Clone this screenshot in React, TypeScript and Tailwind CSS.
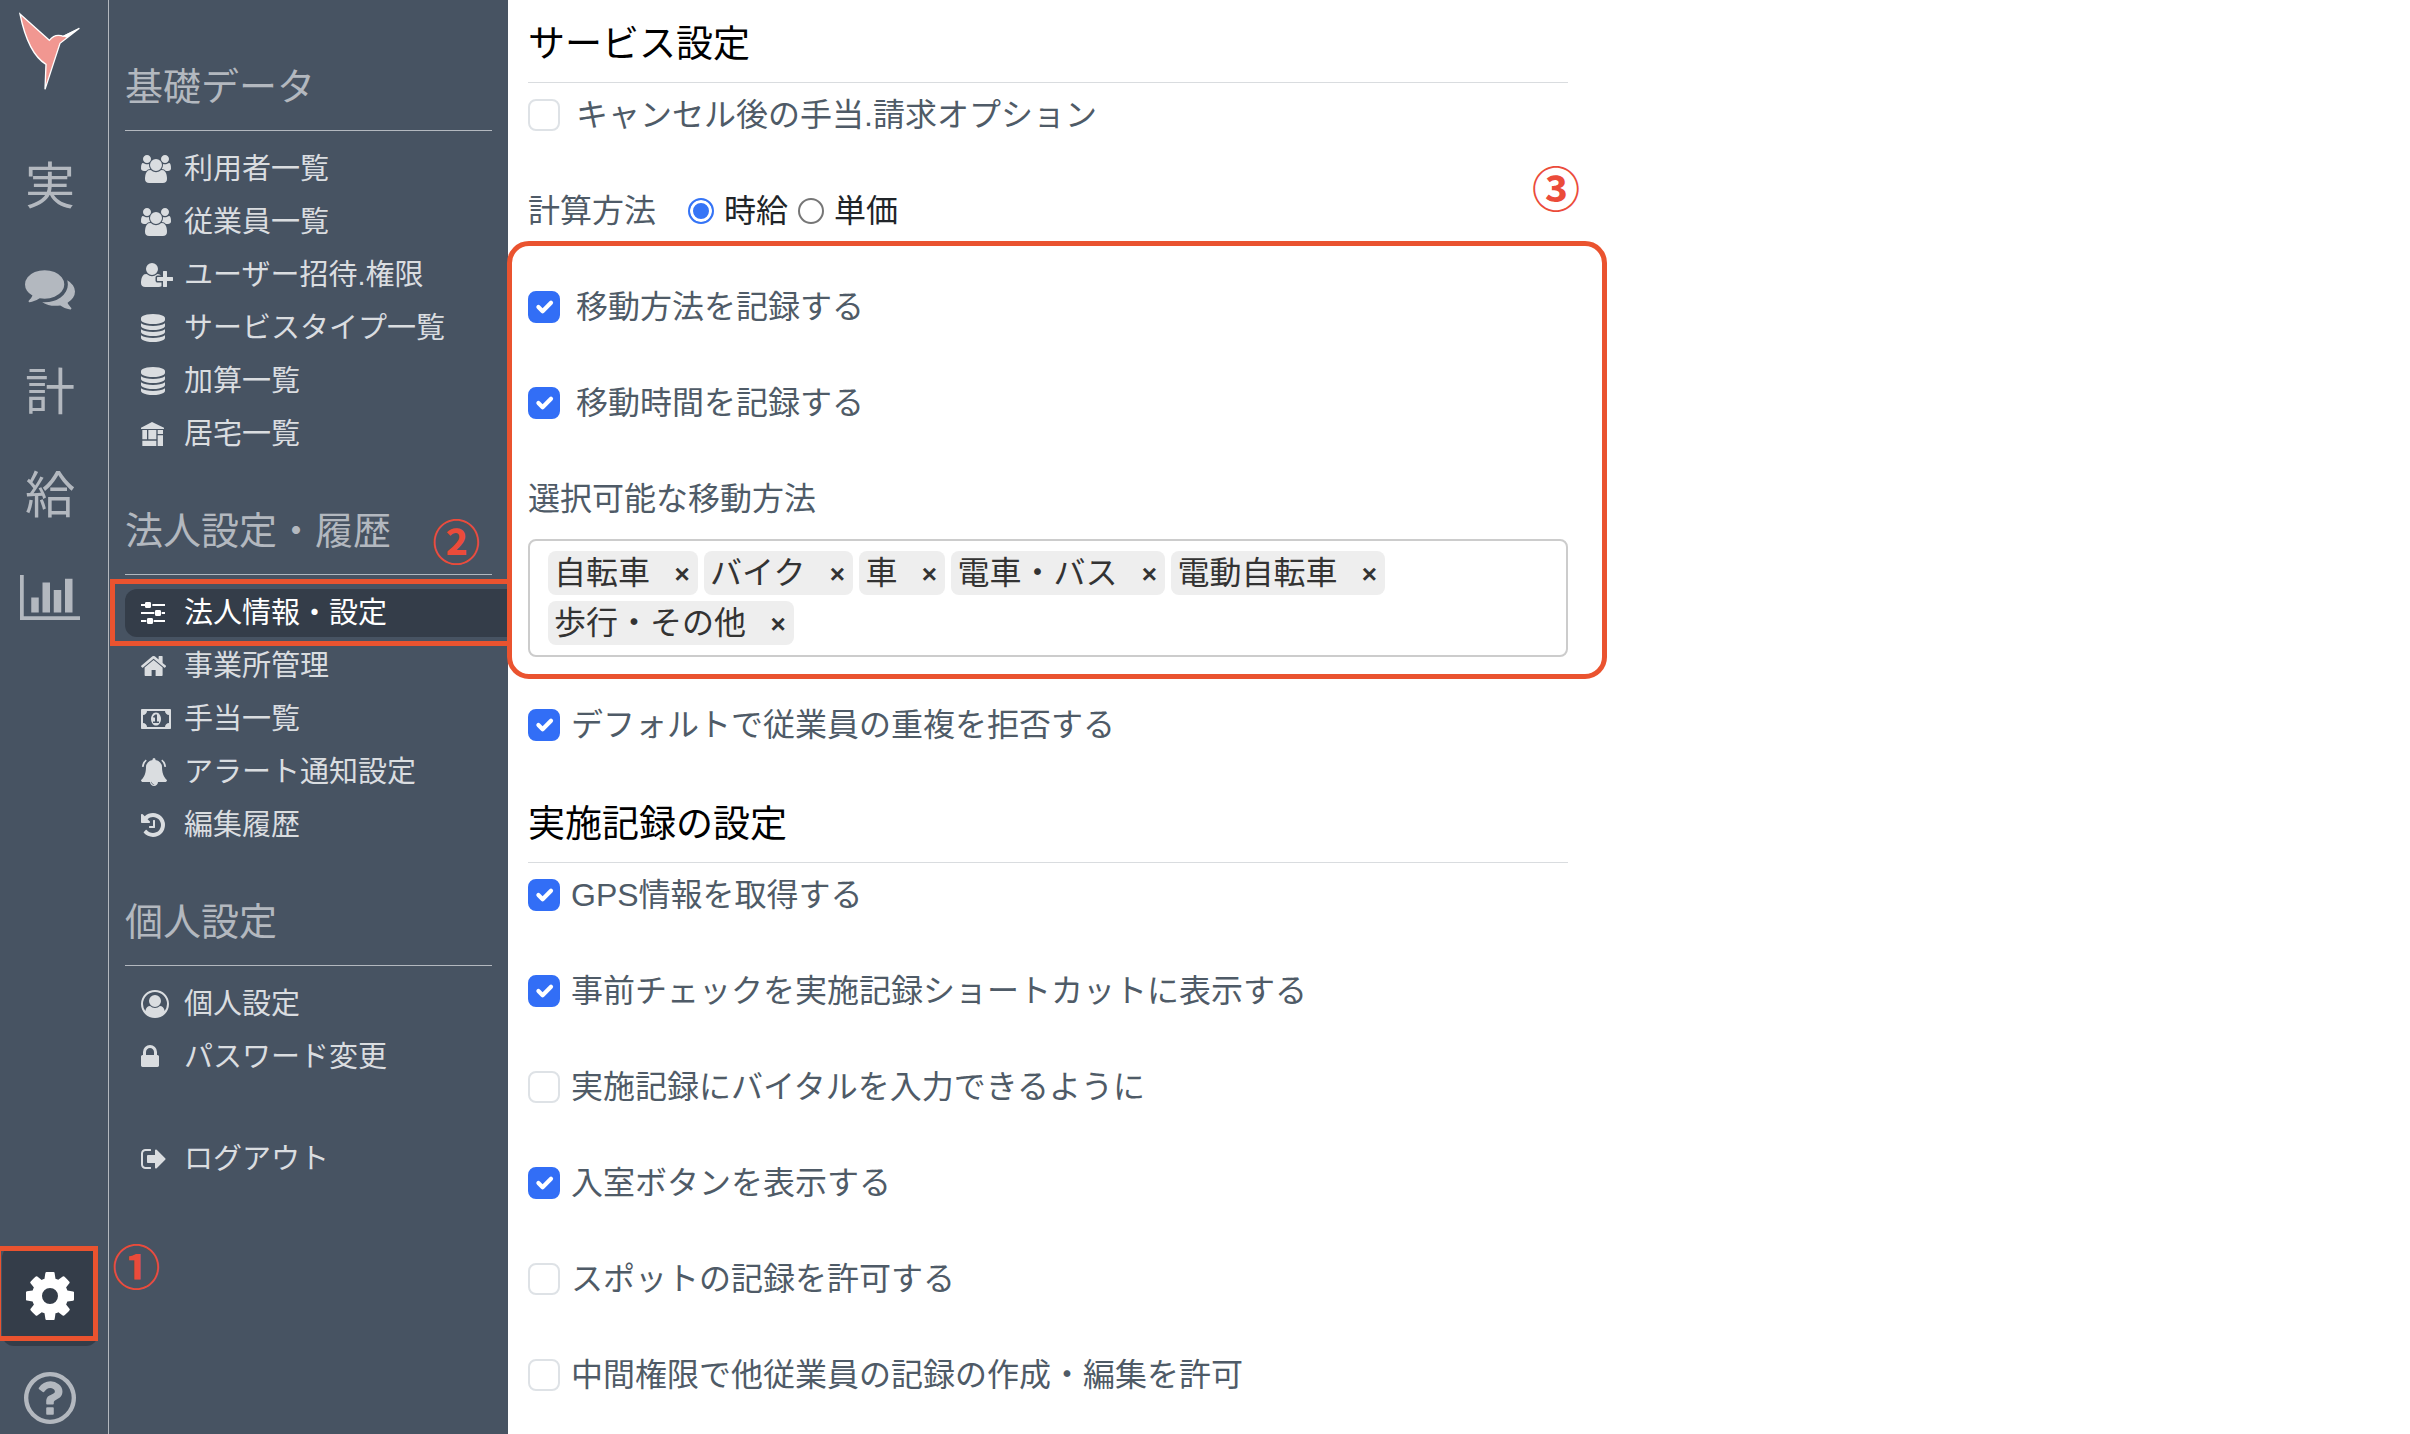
import React from 'react';
import clsx from 'clsx';

interface IconProps {
  name: keyof typeof icons;
  className?: string;
}

interface MenuItem {
  icon: keyof typeof icons;
  label: string;
  active?: boolean;
}

const icons = {
  users: {
    box: '0 0 1920 1792',
    d: 'M593 896q-162 5-265 128h-134q-82 0-138-40.5t-56-118.5q0-353 124-353 6 0 43.5 21t97.5 42.5 119 21.5q67 0 133-23-5 37-5 66 0 139 81 256zm1071 637q0 120-73 189.5t-194 69.5h-874q-121 0-194-69.5t-73-189.5q0-53 3.5-103.5t14-109 26.5-108.5 43-97.5 62-81 85.5-53.5 111.5-20q10 0 43 21.5t73 48 107 48 135 21.5 135-21.5 107-48 73-48 43-21.5q61 0 111.5 20t85.5 53.5 62 81 43 97.5 26.5 108.5 14 109 3.5 103.5zm-1024-1277q0 106-75 181t-181 75-181-75-75-181 75-181 181-75 181 75 75 181zm704 384q0 159-112.5 271.5t-271.5 112.5-271.5-112.5-112.5-271.5 112.5-271.5 271.5-112.5 271.5 112.5 112.5 271.5zm576 225q0 78-56 118.5t-138 40.5h-134q-103-123-265-128 81-117 81-256 0-29-5-66 66 23 133 23 59 0 119-21.5t97.5-42.5 43.5-21q124 0 124 353zm-128-609q0 106-75 181t-181 75-181-75-75-181 75-181 181-75 181 75 75 181z',
  },
  userPlus: {
    box: '0 0 2048 1792',
    d: 'M704 896q-159 0-271.5-112.5t-112.5-271.5 112.5-271.5 271.5-112.5 271.5 112.5 112.5 271.5-112.5 271.5-271.5 112.5zm960 128h352q13 0 22.5 9.5t9.5 22.5v192q0 13-9.5 22.5t-22.5 9.5h-352v352q0 13-9.5 22.5t-22.5 9.5h-192q-13 0-22.5-9.5t-9.5-22.5v-352h-352q-13 0-22.5-9.5t-9.5-22.5v-192q0-13 9.5-22.5t22.5-9.5h352v-352q0-13 9.5-22.5t22.5-9.5h192q13 0 22.5 9.5t9.5 22.5v352zm-736 224q0 52 38 90t90 38h256v238q-68 50-171 50h-874q-121 0-194-69t-73-190q0-53 3.5-103.5t14-109 26.5-108.5 43-97.5 62-81 85.5-53.5 111.5-20q19 0 39 17 79 61 154.5 91.5t164.5 30.5 164.5-30.5 154.5-91.5q20-17 39-17 132 0 217 96h-223q-52 0-90 38t-38 90v192z',
  },
  database: {
    box: '128 0 1536 1792',
    d: 'M896 768q237 0 443-43t325-127v170q0 69-103 128t-280 93.5-385 34.5-385-34.5-280-93.5-103-128v-170q119 84 325 127t443 43zm0 768q237 0 443-43t325-127v170q0 69-103 128t-280 93.5-385 34.5-385-34.5-280-93.5-103-128v-170q119 84 325 127t443 43zm0-384q237 0 443-43t325-127v170q0 69-103 128t-280 93.5-385 34.5-385-34.5-280-93.5-103-128v-170q119 84 325 127t443 43zm0-1152q208 0 385 34.5t280 93.5 103 128v128q0 69-103 128t-280 93.5-385 34.5-385-34.5-280-93.5-103-128v-128q0-69 103-128t280-93.5 385-34.5z',
  },
  building: {
    box: '0 -6 69 84',
    d: 'M0 17L33 0L69 17V21H0zM4 24h14v28H4zM22 24h24v28H22zM50 24h16v12H50zM4 56h42v16H4zM50 40h16v32H50z',
  },
  sliders: {
    box: '0 0 72 84',
    d: 'M0 15h12v6H0zM34 15h38v6H34zM0 39h40v6H0zM62 39h10v6H62zM0 63h16v6H0zM38 63h34v6H38zM16 9h10q4 0 4 4v10q0 4-4 4h-10q-4 0-4-4v-10q0-4 4-4zM46 33h10q4 0 4 4v10q0 4-4 4h-10q-4 0-4-4v-10q0-4 4-4zM22 57h10q4 0 4 4v10q0 4-4 4h-10q-4 0-4-4v-10q0-4 4-4z',
  },
  home: {
    box: '89 0 1614 1792',
    d: 'M1472 992v480q0 26-19 45t-45 19h-384v-384h-256v384h-384q-26 0-45-19t-19-45v-480q0-1 .5-3t.5-3l575-474 575 474q1 2 1 6zm223-69l-62 74q-8 9-21 11h-3q-13 0-21-7l-692-577-692 577q-12 8-24 7-13-2-21-11l-62-74q-8-10-7-23.5t11-21.5l719-599q32-26 76-26t76 26l244 204v-195q0-14 9-23t23-9h192q14 0 23 9t9 23v408l219 182q10 8 11 21.5t-7 23.5z',
  },
  money: {
    box: '0 0 1920 1792',
    d: 'M768 1152h384v-96h-128v-448h-114l-148 137 77 80q42-37 55-57h2v288h-128v96zm512-256q0 70-21 142t-59.5 134-101.5 101-138 39-138-39-101.5-101-59.5-134-21-142 21-142 59.5-134 101.5-101 138-39 138 39 101.5 101 59.5 134 21 142zm512 256v-512q-106 0-181-75t-75-181h-1152q0 106-75 181t-181 75v512q106 0 181 75t75 181h1152q0-106 75-181t181-75zm128-832v1152q0 26-19 45t-45 19h-1792q-26 0-45-19t-19-45v-1152q0-26 19-45t45-19h1792q26 0 45 19t19 45z',
  },
  bell: {
    box: '64 0 1664 1792',
    d: 'M912 1696q0-16-16-16-59 0-101.5-42.5t-42.5-101.5q0-16-16-16t-16 16q0 73 51.5 124.5t124.5 51.5q16 0 16-16zm816-288q0 52-38 90t-90 38h-448q0 106-75 181t-181 75-181-75-75-181h-448q-52 0-90-38t-38-90q50-42 91-88t85-119.5 74.5-158.5 50-206 19.5-260q0-152 117-282.5t307-158.5q-8-19-8-39 0-40 28-68t68-28 68 28 28 68q0 20-8 39 190 28 307 158.5t117 282.5q0 139 19.5 260t50 206 74.5 158.5 85 119.5 91 88zM370 90L430 170Q260 320 230 580L120 560Q150 260 370 90zM1422 90L1362 170Q1532 320 1562 580L1672 560Q1642 260 1422 90z',
  },
  history: {
    box: '128 0 1536 1792',
    d: 'M1664 896q0 156-61 298t-164 245-245 164-298 61q-172 0-327-72.5t-264-204.5q-7-10-6.5-22.5t8.5-20.5l137-138q10-9 25-9 16 2 23 12 73 95 179 147t225 52q104 0 198.5-40.5t163.5-109.5 109.5-163.5 40.5-198.5-40.5-198.5-109.5-163.5-163.5-109.5-198.5-40.5q-98 0-188 35.5t-160 101.5l137 138q31 30 14 69-17 40-59 40h-448q-26 0-45-19t-19-45v-448q0-42 40-59 39-17 69 14l130 129q107-101 244.5-156.5t284.5-55.5q156 0 298 61t245 164 164 245 61 298zm-640-288v448q0 14-9 23t-23 9h-320q-14 0-23-9t-9-23v-64q0-14 9-23t23-9h224v-352q0-14 9-23t23-9h64q14 0 23 9t9 23z',
  },
  userCircle: {
    box: '0 0 1792 1792',
    d: 'M896 0q182 0 348 71t286 191 191 286 71 348q0 181-70.5 347t-190.5 286-286 191.5-349 71.5-349-71-285.5-191.5-190.5-286-71-347.5 71-348 191-286 286-191 348-71zm619 1351q149-205 149-455 0-156-61-298t-164-245-245-164-298-61-298 61-245 164-164 245-61 298q0 250 149 455 66-327 306-327 131 128 313 128t313-128q240 0 306 327zm-235-647q0-159-112.5-271.5t-271.5-112.5-271.5 112.5-112.5 271.5 112.5 271.5 271.5 112.5 271.5-112.5 112.5-271.5z',
  },
  lock: {
    box: '320 0 1152 1792',
    d: 'M640 768h512v-192q0-106-75-181t-181-75-181 75-75 181v192zm832 96v576q0 40-28 68t-68 28h-960q-40 0-68-28t-28-68v-576q0-40 28-68t68-28h32v-192q0-184 132-316t316-132 316 132 132 316v192h32q40 0 68 28t28 68z',
  },
  signOut: {
    box: '64 0 1568 1792',
    d: 'M704 1440q0 4 1 20t.5 26.5-3 23.5-10 19.5-20.5 6.5h-320q-119 0-203.5-84.5t-84.5-203.5v-704q0-119 84.5-203.5t203.5-84.5h320q13 0 22.5 9.5t9.5 22.5q0 4 1 20t.5 26.5-3 23.5-10 19.5-20.5 6.5h-320q-66 0-113 47t-47 113v704q0 66 47 113t113 47h312l11.5 1 11.5 3 8 5.5 7 9 2 13.5zm928-544q0 26-19 45l-544 544q-19 19-45 19t-45-19-19-45v-288h-448q-26 0-45-19t-19-45v-384q0-26 19-45t45-19h448v-288q0-26 19-45t45-19 45 19l544 544q19 19 19 45z',
  },
  comments: {
    box: '0 0 1792 1792',
    d: 'M1408 768q0 139-94 257t-256.5 186.5-353.5 68.5q-86 0-176-16-124 88-278 128-36 9-86 16h-3q-11 0-20.5-8t-11.5-21q-1-3-1-6.5t.5-6.5 2-6l2.5-5 3.5-5.5 4-5 4.5-5 4-4.5q5-6 23-25t26-29.5 22.5-29 25-38.5 20.5-44q-124-72-195-177t-71-224q0-139 94-257t256.5-186.5 353.5-68.5 353.5 68.5 256.5 186.5 94 257zm384 256q0 120-71 224.5t-195 176.5q10 24 20.5 44t25 38.5 22.5 29 26 29.5 23 25q1 1 4 4.5t4.5 5 4 5 3.5 5.5l2.5 5 2 6 .5 6.5-1 6.5q-3 14-13 22t-22 7q-50-7-86-16-154-40-278-128-90 16-176 16-271 0-472-132 58 4 88 4 161 0 309-45t264-129q125-92 192-212t67-254q0-77-23-152 129 71 204 178t75 230z',
  },
  chart: {
    box: '0 128 2048 1536',
    d: 'M640 896v512h-256v-512h256zm384-512v1024h-256v-1024h256zm1024 1152v128h-2048v-1536h128v1408h1920zm-640-896v768h-256v-768h256zm384-384v1152h-256v-1152h256z',
  },
  cog: {
    box: '128 128 1536 1536',
    d: 'M1152 896q0-106-75-181t-181-75-181 75-75 181 75 181 181 75 181-75 75-181zm512-109v222q0 12-8 23t-20 13l-185 28q-19 54-39 91 35 50 107 138 10 12 10 25t-9 23q-27 37-99 108t-94 71q-12 0-26-9l-138-108q-44 23-91 38-16 136-29 186-7 28-36 28h-222q-14 0-24.5-8.5t-11.5-21.5l-28-184q-49-16-90-37l-141 107q-10 9-25 9-14 0-25-11-126-114-165-168-7-10-7-23 0-12 8-23 15-21 51-66.5t54-70.5q-27-50-41-99l-183-27q-13-2-21-12.5t-8-23.5v-222q0-12 8-23t19-13l186-28q14-46 39-92-40-57-107-138-10-12-10-24 0-10 9-23 26-36 98.5-107.5t94.5-71.5q13 0 26 10l138 107q44-23 91-38 16-136 29-186 7-28 36-28h222q14 0 24.5 8.5t11.5 21.5l28 184q49 16 90 37l142-107q9-9 24-9 13 0 25 10 129 119 165 170 7 8 7 22 0 12-8 23-15 21-51 66.5t-54 70.5q26 50 41 98l183 28q13 2 21 12.5t8 23.5z',
  },
  question: {
    box: '128 128 1536 1536',
    d: 'M1008 1200v160q0 14-9 23t-23 9h-160q-14 0-23-9t-9-23v-160q0-14 9-23t23-9h160q14 0 23 9t9 23zm256-496q0 50-15 90t-45.5 69-52 44-59.5 36q-32 18-46.5 28t-26 24-11.5 29v32q0 14-9 23t-23 9h-160q-14 0-23-9t-9-23v-68q0-35 10.5-64.5t24-47.5 39-35.5 41-25.5 44.5-21q53-25 75-43t22-49q0-42-43.5-71.5t-95.5-29.5q-56 0-95 27-29 20-80 83-9 12-25 12-11 0-19-6l-108-82q-10-7-12-20t5-23q122-192 349-192 129 0 238.5 89.5t109.5 214.5zm-368-448q-130 0-248.5 51t-204 136.5-136.5 204-51 248.5 51 248.5 136.5 204 204 136.5 248.5 51 248.5-51 204-136.5 136.5-204 51-248.5-51-248.5-136.5-204-204-136.5-248.5-51zm768 640q0 209-103 385.5t-279.5 279.5-385.5 103-385.5-103-279.5-279.5-103-385.5 103-385.5 279.5-279.5 385.5-103 385.5 103 279.5 279.5 103 385.5z',
  },
};

const menu: { title: string; items: MenuItem[] }[] = [
  {
    title: '基礎データ',
    items: [
      { icon: 'users', label: '利用者一覧' },
      { icon: 'users', label: '従業員一覧' },
      { icon: 'userPlus', label: 'ユーザー招待.権限' },
      { icon: 'database', label: 'サービスタイプ一覧' },
      { icon: 'database', label: '加算一覧' },
      { icon: 'building', label: '居宅一覧' },
    ],
  },
  {
    title: '法人設定・履歴',
    items: [
      { icon: 'sliders', label: '法人情報・設定', active: true },
      { icon: 'home', label: '事業所管理' },
      { icon: 'money', label: '手当一覧' },
      { icon: 'bell', label: 'アラート通知設定' },
      { icon: 'history', label: '編集履歴' },
    ],
  },
  {
    title: '個人設定',
    items: [
      { icon: 'userCircle', label: '個人設定' },
      { icon: 'lock', label: 'パスワード変更' },
    ],
  },
];

const transports = ['自転車', 'バイク', '車', '電車・バス', '電動自転車', '歩行・その他'];

const recordSettings = [
  { id: 'gps', label: 'GPS情報を取得する', checked: true },
  { id: 'precheck', label: '事前チェックを実施記録ショートカットに表示する', checked: true },
  { id: 'vital', label: '実施記録にバイタルを入力できるように', checked: false },
  { id: 'entry', label: '入室ボタンを表示する', checked: true },
  { id: 'spot', label: 'スポットの記録を許可する', checked: false },
  { id: 'middle', label: '中間権限で他従業員の記録の作成・編集を許可', checked: false },
];

const Icon = ({ name, className }: IconProps) => (
  <svg viewBox={icons[name].box} className={className} fill="currentColor" aria-hidden="true">
    <path d={icons[name].d} />
  </svg>
);

const Logo = () => (
  <svg viewBox="54 36 192 240" className="h-20 w-16" aria-hidden="true">
    <path
      d="M60 42L148 121Q160 106 175 106Q184 106 190 109L238 85L180 130L135 268L138 193Q84 160 60 42z"
      fill="#f19791"
      stroke="#fff"
      strokeWidth="4"
    />
    <path d="M240 83L188 108L200 113z" fill="#fff" />
  </svg>
);

const Mark = ({ children, className }: { children: string; className: string }) => (
  <span className={clsx('absolute text-5xl leading-none font-bold text-[#eb4b3a]', className)}>{children}</span>
);

const RailLink = ({ label, children }: { label: string; children: React.ReactNode }) => (
  <a href="#" aria-label={label} className="flex h-25 w-24 items-center justify-center">
    {children}
  </a>
);

const RailText = ({ children }: { children: string }) => (
  <span className="pt-1 text-[50px] leading-none">{children}</span>
);

const MenuLink = ({ icon, label, active }: MenuItem) => (
  <a
    href="#"
    className={clsx(
      'relative flex h-12 items-center rounded-l-xl pl-4 text-[29px] leading-none',
      active ? 'bg-[#343d49] text-white' : 'text-[#dadde0]'
    )}
  >
    <span className="w-[43px]">
      <Icon name={icon} className="h-7 w-auto" />
    </span>
    {label}
    {active && (
      <>
        <span className="absolute -top-[10px] -right-1 -bottom-[9px] -left-[15px] border-5 border-[#ea532f]" />
        <Mark className="-top-[69px] left-[307px]">②</Mark>
      </>
    )}
  </a>
);

const SectionTitle = ({ children }: { children: string }) => (
  <h2 className="border-b border-[#d9dcdf] pb-3 text-[37px] leading-[50px] text-black">{children}</h2>
);

interface CheckRowProps {
  id: string;
  label: string;
  checked?: boolean;
  wide?: boolean;
}

const CheckRow = ({ id, label, checked, wide }: CheckRowProps) => (
  <div className={clsx('flex h-12 items-center', wide ? 'gap-4' : 'gap-[11px]')}>
    <span className="relative size-8">
      <input
        id={id}
        type="checkbox"
        defaultChecked={checked}
        className="peer block size-8 appearance-none rounded-lg border-2 border-[#dee2e6] bg-white checked:border-[#326ef6] checked:bg-[#326ef6]"
      />
      <svg
        viewBox="0 0 20 20"
        className="pointer-events-none absolute inset-0.5 hidden size-7 peer-checked:block"
        aria-hidden="true"
      >
        <path d="M6 10l3 3 6-6" fill="none" stroke="#fff" strokeWidth="3" strokeLinecap="round" strokeLinejoin="round" />
      </svg>
    </span>
    <label htmlFor={id}>{label}</label>
  </div>
);

const radioClass =
  'size-[26px] appearance-none rounded-full border-2 border-[#767676] bg-white checked:border-[#3574f6] checked:bg-[#3574f6] checked:shadow-[inset_0_0_0_3px_#fff]';

const App = () => {
  return (
    <div className="flex min-h-screen bg-white font-['Liberation_Sans','Noto_Sans_CJK_JP',sans-serif]">
      <aside className="sticky top-0 z-10 flex h-screen w-[109px] shrink-0 flex-col border-r border-[#b3b8bf] bg-[#475362] pl-0.5 text-[#b3b8bf]">
        <a href="#" aria-label="ホーム" className="mt-3 mb-[43px] flex w-24 justify-center">
          <Logo />
        </a>
        <nav className="flex flex-col gap-[3px]">
          <RailLink label="実施">
            <RailText>実</RailText>
          </RailLink>
          <RailLink label="メッセージ">
            <Icon name="comments" className="size-[50px]" />
          </RailLink>
          <RailLink label="計画">
            <RailText>計</RailText>
          </RailLink>
          <RailLink label="給与">
            <RailText>給</RailText>
          </RailLink>
          <RailLink label="統計">
            <Icon name="chart" className="h-[45px] w-[60px]" />
          </RailLink>
        </nav>
        <div className="mt-auto flex flex-col gap-4">
          <a
            href="#"
            aria-label="設定"
            className="relative flex h-25 w-24 items-center justify-center rounded-xl bg-[#343d49] text-white"
          >
            <Icon name="cog" className="size-12" />
            <span className="absolute top-0 right-0 bottom-[5px] -left-[6px] border-5 border-[#ea532f]" />
            <Mark className="-top-[1px] left-[110px]">①</Mark>
          </a>
          <a href="#" aria-label="ヘルプ" className="flex h-18 w-24 items-center justify-center">
            <Icon name="question" className="size-[52px]" />
          </a>
        </div>
      </aside>

      <nav className="relative w-[399px] shrink-0 bg-[#475362] pt-[62px] pl-4">
        {menu.map((section) => (
          <section key={section.title} className="mb-12">
            <h2 className="mr-4 mb-[14px] border-b border-[#b3b8bf] pb-[18px] text-[38px] leading-[50px] text-[#b3b8bf]">
              {section.title}
            </h2>
            <div className="flex flex-col gap-[5px]">
              {section.items.map((item) => (
                <MenuLink key={item.label} {...item} />
              ))}
            </div>
          </section>
        ))}
        <div className="mt-[54px]">
          <MenuLink icon="signOut" label="ログアウト" />
        </div>
      </nav>

      <main className="min-w-0 flex-1 px-5 pt-5 text-[32px] leading-12 text-[#4f5b67]">
        <div className="max-w-[1040px]">
          <SectionTitle>サービス設定</SectionTitle>
          <div className="mt-2 flex flex-col gap-12">
            <CheckRow id="cancel" label="キャンセル後の手当.請求オプション" wide />
            <fieldset className="flex h-12 items-center">
              <legend className="float-left mr-8">計算方法</legend>
              <div className="flex items-center gap-[10px] text-[#212529]">
                <input id="hourly" type="radio" name="calc" defaultChecked className={radioClass} />
                <label htmlFor="hourly">時給</label>
                <input id="unit" type="radio" name="calc" className={radioClass} />
                <label htmlFor="unit">単価</label>
              </div>
            </fieldset>
            <div className="relative flex flex-col gap-12">
              <CheckRow id="method" label="移動方法を記録する" checked wide />
              <CheckRow id="time" label="移動時間を記録する" checked wide />
              <div>
                <p>選択可能な移動方法</p>
                <ul className="mt-4 flex flex-wrap gap-[6px] rounded-lg border-2 border-[#ccc] px-[18px] py-[10px] text-[#333]">
                  {transports.map((name) => (
                    <li key={name} className="flex h-11 items-center rounded-lg bg-[#eee] pl-[6px]">
                      {name}
                      <button type="button" aria-label={`${name}を削除`} className="w-12 pl-4 text-left">
                        <span className="block w-8 pt-0.5 text-center text-[26px] leading-11 font-bold">×</span>
                      </button>
                    </li>
                  ))}
                </ul>
              </div>
              <span className="pointer-events-none absolute -top-[42px] -right-[39px] -bottom-[22px] -left-[21px] rounded-[22px] border-5 border-[#ea532f]" />
              <Mark className="-top-[116px] right-[-12px]">③</Mark>
            </div>
          </div>
          <div className="mt-11 mb-[51px]">
            <CheckRow id="overlap" label="デフォルトで従業員の重複を拒否する" checked />
          </div>

          <SectionTitle>実施記録の設定</SectionTitle>
          <div className="mt-2 flex flex-col gap-12">
            {recordSettings.map((row) => (
              <CheckRow key={row.id} {...row} />
            ))}
          </div>
        </div>
      </main>
    </div>
  );
};

export default App;
